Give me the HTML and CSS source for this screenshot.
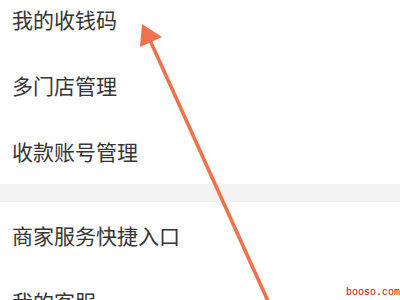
FILE: index.html
```html
<!DOCTYPE html>
<html lang="zh-CN">
<head>
<meta charset="utf-8">
<link rel="stylesheet" href="styles.css">
</head>
<body>
<div class="screen">
  <div class="group">
    <div class="row">我的收钱码</div>
    <div class="row">多门店管理</div>
    <div class="row">收款账号管理</div>
  </div>
  <div class="gap"></div>
  <div class="group">
    <div class="row">商家服务快捷入口</div>
    <div class="row">我的客服</div>
  </div>
  <svg class="arrow" width="400" height="300" viewBox="0 0 400 300">
    <line x1="149" y1="38" x2="272" y2="310" stroke="#f0714a" stroke-width="3.6"/>
    <polygon points="142,24 140,47 162,37" fill="#f0714a"/>
  </svg>
  <div class="mark">booso.com</div>
</div>
</body>
</html>
```
FILE: styles.css
```css
html, body {
  margin: 0;
  padding: 0;
  background: #ffffff;
}
.screen {
  position: relative;
  width: 400px;
  height: 300px;
  overflow: hidden;
  background: #ffffff;
}
.group {
  display: flex;
  flex-direction: column;
}
.group:first-child {
  margin-top: -14px;
}
.row {
  height: 66px;
  display: flex;
  align-items: center;
  padding-left: 12px;
  font-family: "Noto Sans CJK SC", "Noto Sans", sans-serif;
  font-size: 21px;
  line-height: 1;
  color: #353535;
}
.gap {
  height: 18px;
  background: #f3f3f3;
}
.arrow {
  position: absolute;
  left: 0;
  top: 0;
}
.mark {
  position: absolute;
  right: 0;
  bottom: 2px;
  font-family: "Liberation Mono", monospace;
  font-size: 10px;
  line-height: 10px;
  color: #d40000;
}
```
